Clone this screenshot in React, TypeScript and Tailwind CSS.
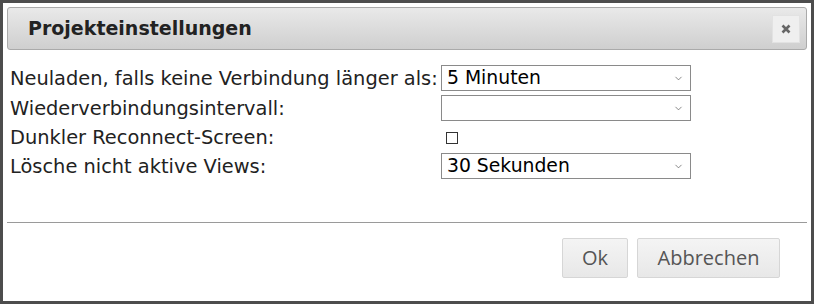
import { ChevronDown } from 'lucide-react'

const labelFont = { fontFamily: '"DejaVu Sans", Verdana, sans-serif' }

function Select({ value }: { value?: string }) {
  return (
    <div className="flex h-[26px] w-[250px] items-center justify-between border border-[#8a8a8a] bg-white pl-[5px] pr-[6px] pt-[1px] text-[18.8px] text-black">
      <span>{value}</span>
      <ChevronDown className="h-[11px] w-[11px] text-[#555]" strokeWidth={1.5} />
    </div>
  )
}

export default function App() {
  return (
    <div className="h-[304px] w-[814px] border-[3px] border-[#4d4d4d] bg-white" style={labelFont}>
      <div className="px-[4px] pt-[4px]">
        <div className="flex h-[43px] items-center justify-between rounded-[3px] border border-[#aaaaaa] bg-gradient-to-b from-[#e9e9e9] to-[#cfcfcf] pl-[20px] pr-[6px]">
          <span className="text-[19px] font-bold text-[#222]">Projekteinstellungen</span>
          <button className="flex h-[28px] w-[28px] items-center justify-center border border-[#e2e2e2] bg-[#efefef]">
            <svg width="10" height="10" viewBox="0 0 10 10">
              <path d="M1.5 1.5 L8.5 8.5 M8.5 1.5 L1.5 8.5" stroke="#666" strokeWidth="2.6" strokeLinecap="butt" />
            </svg>
          </button>
        </div>
      </div>

      <div className="grid grid-cols-[431px_250px] gap-y-[4px] pl-[7px] pt-[15px] text-[19.4px] text-[#222]">
        <div className="flex h-[26px] items-center pt-[2px]">Neuladen, falls keine Verbindung länger als:</div>
        <Select value="5 Minuten" />
        <div className="flex h-[26px] items-center pt-[2px]">Wiederverbindungsintervall:</div>
        <Select />
        <div className="flex h-[24px] items-center pt-[2px]">Dunkler Reconnect-Screen:</div>
        <div className="flex h-[24px] items-center pl-[5px] pt-[1px]">
          <div className="h-[12px] w-[12px] border border-[#333] bg-white" />
        </div>
        <div className="flex h-[26px] items-center pt-[2px]">Lösche nicht aktive Views:</div>
        <Select value="30 Sekunden" />
      </div>

      <div className="mx-[4px] mt-[43px] border-t border-[#9a9a9a]" />

      <div className="flex justify-end gap-[9px] pr-[31px] pt-[15px]" style={{ fontFamily: '"Open Sans", sans-serif' }}>
        <button className="h-[40px] w-[66px] rounded-[2px] border border-[#d6d6d6] bg-gradient-to-b from-[#f4f4f4] to-[#e8e8e8] text-[20px] text-[#555]">
          Ok
        </button>
        <button className="h-[40px] w-[143px] rounded-[2px] border border-[#d6d6d6] bg-gradient-to-b from-[#f4f4f4] to-[#e8e8e8] text-[20px] text-[#555]">
          Abbrechen
        </button>
      </div>
    </div>
  )
}
